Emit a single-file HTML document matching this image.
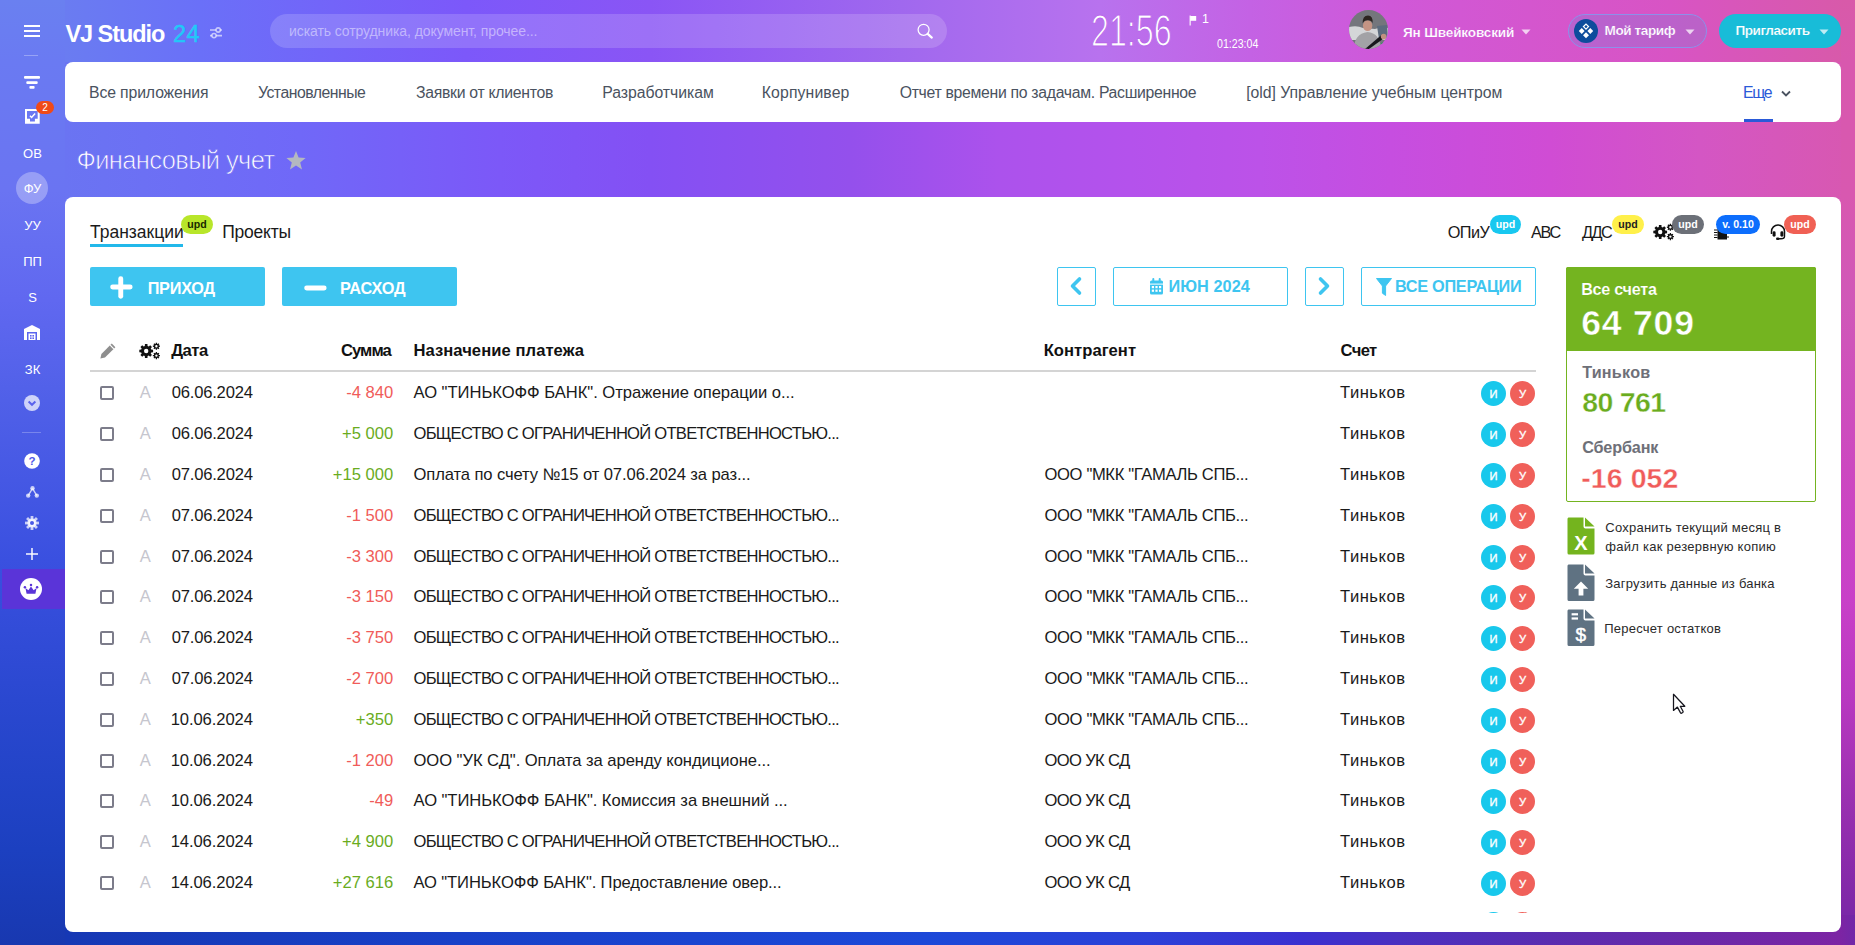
<!DOCTYPE html>
<html><head><meta charset="utf-8">
<style>
*{box-sizing:border-box;margin:0;padding:0}
html,body{width:1855px;height:945px;overflow:hidden}
body{position:relative;font-family:"Liberation Sans",sans-serif;color:#1a1a1a;
background:linear-gradient(to right,#6a80f0 0px,#6a7cf1 65px,#6a70f8 200px,#7c58fa 465px,#8a55f5 650px,#a068ee 900px,#b872ee 1100px,#c462e4 1250px,#d058d8 1390px,#d854c4 1670px,#d85aa8 1855px);}
.abs{position:absolute}
#bgT{position:absolute;left:0;top:62px;width:1855px;height:150px;background:linear-gradient(to right,#6a74f2 0px,#6a74f2 65px,#7068f8 300px,#7c58f8 500px,#8450f4 650px,#9450ec 850px,#ac52ec 1000px,#b452ec 1130px,#bc52e8 1260px,#c64ee0 1390px,#d04cd4 1550px,#d456c4 1700px,#d858b0 1855px)}
#bgL{position:absolute;left:0;top:0;width:65px;height:945px;background:linear-gradient(to bottom,#6a80f0 0px,#6a7af2 62px,#6a74f2 190px,#6068f0 300px,#5060e8 400px,#3a50e0 560px,#2a48d0 700px,#1c40c0 850px,#1838b0 945px)}
#bgR{position:absolute;left:1841px;top:0;width:14px;height:945px;background:linear-gradient(to bottom,#d85aa9 0px,#d858ae 62px,#d858b0 197px,#d058b8 300px,#cc48c0 470px,#c840c8 600px,#b838c0 700px,#9a30b0 800px,#8028a8 900px,#7028a8 945px)}
#bgB{position:absolute;left:65px;top:915px;width:1790px;height:30px;background:linear-gradient(to right,#1638b4 0px,#1840c8 395px,#1c48d8 860px,#2c40d8 1085px,#3a30d0 1235px,#4a30c0 1335px,#5a2cb0 1485px,#6a28a8 1635px,#7c24a4 1776px,#7028a8 1790px)}
.t{position:absolute;white-space:nowrap;line-height:1}
.card{position:absolute;background:#fff;border-radius:8px}
.tbl{position:absolute;left:0;top:0;width:1855px;height:913px;overflow:hidden}
.cb{position:absolute;left:100px;width:14px;height:14px;border:2px solid #7c7c8a;border-radius:2px}
.ci,.cu{position:absolute;width:25px;height:25px;border-radius:50%;color:#fff;font-size:11.2px;font-weight:400;-webkit-text-stroke:0.35px #fff;text-align:center;line-height:27px}
.ci{background:#18c8ec}.cu{background:#f0605a}
.badge{position:absolute;top:215px;height:19px;border-radius:10px;color:#fff;font-size:10.6px;font-weight:700;text-align:center;line-height:19px;white-space:nowrap}
.side{position:absolute;left:0;width:65px;text-align:center;color:#fff;font-size:13px;line-height:1}
</style></head><body>
<div id="bgT"></div><div id="bgL"></div><div id="bgR"></div><div id="bgB"></div>
<div class="abs" style="left:24px;top:25px;width:16px;height:2px;background:#fff"></div>
<div class="abs" style="left:24px;top:30px;width:16px;height:2px;background:#fff"></div>
<div class="abs" style="left:24px;top:35px;width:16px;height:2px;background:#fff"></div>
<div class="abs" style="left:24px;top:55px;width:14px;height:1px;background:rgba(255,255,255,.3)"></div>
<svg class="abs" style="left:24px;top:76px" width="16" height="13" viewBox="0 0 16 13"><rect x="0" y="0" width="16" height="2.8" rx="1" fill="#fff"/><rect x="2.3" y="5.2" width="11.4" height="2.8" rx="1" fill="#fff"/><rect x="5.4" y="10" width="5.2" height="2.8" rx="1" fill="#fff"/></svg>
<svg class="abs" style="left:25px;top:109px" width="15" height="15" viewBox="0 0 15 15"><path d="M0 0H14.7V14.7H0Z M2 2V9.8H5V12.6H9.9V9.8H12.7V2Z" fill="#fff" fill-rule="evenodd"/><path d="M5 6.7L6.6 8.4L10.1 4.5" stroke="#fff" stroke-width="1.5" fill="none"/></svg>
<div class="abs" style="left:36px;top:101px;width:18px;height:13px;border-radius:7px;background:#f04a18;color:#fff;font-size:10px;line-height:13px;text-align:center">2</div>
<div class="side" style="top:147px">ОВ</div>
<div class="abs" style="left:16px;top:172px;width:32px;height:32px;border-radius:50%;background:rgba(255,255,255,.3)"></div>
<div class="side" style="top:182px">ФУ</div>
<div class="side" style="top:219px">УУ</div>
<div class="side" style="top:255px">ПП</div>
<div class="side" style="top:291px">S</div>
<svg class="abs" style="left:24px;top:325px" width="16" height="15" viewBox="0 0 16 15"><path d="M8 0L16 4V15H13V7H3V15H0V4Z" fill="#fff"/><rect x="4.5" y="8.5" width="7" height="6.5" fill="#fff"/><rect x="6" y="10" width="1.6" height="1.6" fill="#6268f0"/><rect x="8.4" y="10" width="1.6" height="1.6" fill="#6268f0"/><rect x="6" y="12.4" width="1.6" height="1.6" fill="#6268f0"/><rect x="8.4" y="12.4" width="1.6" height="1.6" fill="#6268f0"/></svg>
<div class="side" style="top:363px">ЗК</div>
<svg class="abs" style="left:24px;top:395px" width="16" height="16" viewBox="0 0 16 16"><circle cx="8" cy="8" r="8" fill="rgba(255,255,255,.72)"/><path d="M4.6 6.6L8 9.8L11.4 6.6" stroke="#5a62ec" stroke-width="2" fill="none"/></svg>
<div class="abs" style="left:22px;top:432px;width:19px;height:1px;background:rgba(255,255,255,.25)"></div>
<svg class="abs" style="left:24px;top:453px" width="16" height="16" viewBox="0 0 16 16"><circle cx="8" cy="8" r="7.8" fill="#fff"/><text x="8" y="12.3" text-anchor="middle" font-family="Liberation Sans" font-weight="700" font-size="11.5" fill="#5058e8">?</text></svg>
<svg class="abs" style="left:26px;top:486px" width="13" height="12" viewBox="0 0 13 12"><circle cx="6.5" cy="2.3" r="2.2" fill="rgba(255,255,255,.72)"/><circle cx="2.2" cy="9.6" r="2.2" fill="rgba(255,255,255,.72)"/><circle cx="10.8" cy="9.6" r="2.2" fill="rgba(255,255,255,.72)"/><path d="M6.5 2.3L2.2 9.6M6.5 2.3L10.8 9.6" stroke="rgba(255,255,255,.72)" stroke-width="1.4"/></svg>
<svg class="abs" style="left:25px;top:516px" width="14" height="14" viewBox="0 0 14 14"><g fill="rgba(255,255,255,.72)"><circle cx="7" cy="7" r="4.6"/><rect x="5.6" y="0" width="2.8" height="14"/><rect x="0" y="5.6" width="14" height="2.8"/><rect x="5.6" y="0" width="2.8" height="14" transform="rotate(45 7 7)"/><rect x="5.6" y="0" width="2.8" height="14" transform="rotate(-45 7 7)"/></g><circle cx="7" cy="7" r="2" fill="#4a5ae6"/></svg>
<svg class="abs" style="left:26px;top:548px" width="12" height="12" viewBox="0 0 12 12"><rect x="5" y="0" width="2" height="12" fill="rgba(255,255,255,.72)"/><rect x="0" y="5" width="12" height="2" fill="rgba(255,255,255,.72)"/></svg>
<div class="abs" style="left:2px;top:569px;width:63px;height:40px;background:#5a34d8"></div>
<svg class="abs" style="left:20px;top:578px" width="22" height="22" viewBox="0 0 22 22"><circle cx="11" cy="11" r="11" fill="#fff"/><path d="M5.4 10L8.4 12.2L11 8.4L13.6 12.2L16.6 10L15.4 15.7H6.6Z" fill="#5a34d8"/><circle cx="4.9" cy="9.3" r="1.25" fill="#5a34d8"/><circle cx="11" cy="7" r="1.25" fill="#5a34d8"/><circle cx="17.1" cy="9.3" r="1.25" fill="#5a34d8"/></svg>

<div class="t" style="left:65.50px;top:23.11px;font-size:23.5px;font-weight:700;color:#fff;letter-spacing:-1.064px;">VJ Studio</div>
<div class="t" style="left:173.00px;top:23.11px;font-size:23.5px;font-weight:400;color:#22c8f8;letter-spacing:0.430px;-webkit-text-stroke:0.5px #22c8f8;">24</div>
<svg class="abs" style="left:208px;top:25px" width="16" height="14" viewBox="0 0 16 14"><g stroke="rgba(255,255,255,.62)" stroke-width="1.6" fill="none"><path d="M2 5H8M12.3 5H14"/><circle cx="10.2" cy="5" r="2.1"/><path d="M2 10.6H3.8M8.2 10.6H14"/><circle cx="6" cy="10.6" r="2.1"/></g></svg>
<div class="abs" style="left:270px;top:14px;width:677px;height:34px;border-radius:17px;background:rgba(255,255,255,.16)"></div>
<svg class="abs" style="left:914px;top:20px" width="22" height="22" viewBox="0 0 22 22"><circle cx="9.6" cy="9.8" r="5.5" stroke="#fff" stroke-width="1.25" fill="none"/><path d="M13.7 13.9L17.8 17.6" stroke="#fff" stroke-width="2.2" stroke-linecap="round"/></svg>

<div class="t" style="left:289.00px;top:24.15px;font-size:14px;font-weight:400;color:rgba(255,255,255,.47);letter-spacing:-0.084px;">искать сотрудника, документ, прочее...</div>
<div class="t" style="left:1090.92px;top:9.68px;font-size:43.5px;font-weight:400;color:#fff;transform:scaleX(0.7401);transform-origin:0 0;-webkit-text-stroke:1.2px #b868ea;">21:56</div>
<svg class="abs" style="left:1189px;top:15px" width="8" height="11" viewBox="0 0 8 11"><rect x="0.6" y="0.5" width="1.1" height="10" fill="#fff"/><path d="M1.2 1H7.2V5.8H1.2Z" fill="#fff"/></svg>
<div class="t" style="left:1202.00px;top:13.42px;font-size:12.5px;font-weight:400;color:#fff;letter-spacing:-3.400px;">1</div>
<div class="t" style="left:1217.00px;top:37.84px;font-size:12px;font-weight:400;color:#fff;transform:scaleX(0.8844);transform-origin:0 0;">01:23:04</div>
<svg class="abs" style="left:1349px;top:10px" width="39" height="39" viewBox="0 0 39 39"><defs><clipPath id="av"><circle cx="19.5" cy="19.5" r="19.5"/></clipPath></defs><g clip-path="url(#av)"><rect width="39" height="39" fill="#74767c"/><path d="M0 17Q8 15 14 18L26 19Q33 16 39 18V30H0Z" fill="#d4d6d8"/><path d="M28 16L38 15L39 28L30 29Z" fill="#5c6c7e"/><path d="M5 39Q5 24 18.5 22Q31 23 32 39Z" fill="#a2a2a6"/><ellipse cx="18.6" cy="15.6" rx="4.7" ry="5.4" fill="#c49484"/><path d="M13.6 13.6Q13.4 5.6 19 5.6Q24.2 5.8 23.6 13.4Q22.6 10 18.6 10.2Q14.8 10.2 13.6 13.6Z" fill="#2c2420"/><path d="M16 39L33 24.5L36 27.5L20 39Z" fill="#18181c"/><circle cx="34.6" cy="26.6" r="2.8" fill="#c09080"/><path d="M32 33L37 31L38 34L33 36Z" fill="#2a9a60"/></g></svg>
<svg class="abs" style="left:1521px;top:29px" width="10" height="6" viewBox="0 0 10 6"><path d="M0.5 0.5H9.5L5 5.5Z" fill="rgba(255,255,255,.72)"/></svg>
<div class="abs" style="left:1568px;top:14px;width:139px;height:34px;border-radius:17px;border:1px solid #8c90ea;background:rgba(120,130,220,.3)"></div>
<svg class="abs" style="left:1574px;top:19px" width="24" height="24" viewBox="0 0 24 24"><circle cx="12" cy="12" r="12" fill="#0d4c9c"/><g fill="#fff"><path d="M12 13.3L15 16.3L12 19.3L9 16.3Z"/><path d="M7.7 8.9L10.6 11.9L7.7 14.9L4.8 11.9Z"/><path d="M16.3 8.9L19.2 11.9L16.3 14.9L13.4 11.9Z"/></g><path d="M12 5.1L14.5 7.6L12 10.1L9.5 7.6Z" fill="none" stroke="#fff" stroke-width="1.3"/></svg>
<svg class="abs" style="left:1685px;top:29px" width="10" height="6" viewBox="0 0 10 6"><path d="M0.5 0.5H9.5L5 5.5Z" fill="rgba(255,255,255,.72)"/></svg>
<div class="abs" style="left:1719px;top:14px;width:122px;height:34px;border-radius:17px;background:#18bcd8"></div>
<svg class="abs" style="left:1819px;top:29px" width="10" height="6" viewBox="0 0 10 6"><path d="M0.5 0.5H9.5L5 5.5Z" fill="rgba(255,255,255,.72)"/></svg>

<div class="t" style="left:1403.00px;top:26.49px;font-size:13.6px;font-weight:700;color:#fff;letter-spacing:-0.168px;-webkit-text-stroke:0.2px #c952dc;">Ян Швейковский</div>
<div class="t" style="left:1604.50px;top:24.29px;font-size:13.6px;font-weight:700;color:#fff;letter-spacing:-0.417px;-webkit-text-stroke:0.2px #b462d2;">Мой тариф</div>
<div class="t" style="left:1735.40px;top:24.29px;font-size:13.6px;font-weight:700;color:#fff;letter-spacing:-0.469px;-webkit-text-stroke:0.2px #18bcd8;">Пригласить</div>
<div class="card" style="left:65px;top:62px;width:1776px;height:60px"></div>
<div class="t" style="left:89.00px;top:85.13px;font-size:15.8px;font-weight:400;color:#4a5260;letter-spacing:-0.129px;">Все приложения</div>
<div class="t" style="left:258.00px;top:85.13px;font-size:15.8px;font-weight:400;color:#4a5260;letter-spacing:-0.505px;">Установленные</div>
<div class="t" style="left:416.00px;top:85.13px;font-size:15.8px;font-weight:400;color:#4a5260;letter-spacing:-0.291px;">Заявки от клиентов</div>
<div class="t" style="left:602.20px;top:85.13px;font-size:15.8px;font-weight:400;color:#4a5260;letter-spacing:-0.038px;">Разработчикам</div>
<div class="t" style="left:761.80px;top:85.13px;font-size:15.8px;font-weight:400;color:#4a5260;letter-spacing:0.114px;">Корпунивер</div>
<div class="t" style="left:899.70px;top:85.13px;font-size:15.8px;font-weight:400;color:#4a5260;letter-spacing:-0.310px;">Отчет времени по задачам. Расширенное</div>
<div class="t" style="left:1246.20px;top:85.13px;font-size:15.8px;font-weight:400;color:#4a5260;letter-spacing:-0.050px;">[old] Управление учебным центром</div>
<div class="t" style="left:1743.00px;top:85.13px;font-size:15.8px;font-weight:400;color:#2a5ad8;letter-spacing:-1.278px;">Еще</div>
<div class="abs" style="left:1744px;top:119px;width:29px;height:3px;background:#2a5ad8"></div>
<svg class="abs" style="left:1779px;top:89px" width="14" height="9" viewBox="0 0 14 9"><path d="M3 2.5L7 6.5L11 2.5" stroke="#4a5260" stroke-width="1.8" fill="none"/></svg>

<div class="t" style="left:76.50px;top:147.61px;font-size:25.5px;font-weight:400;color:#fff;letter-spacing:-0.634px;-webkit-text-stroke:0.7px #6e6cf4;">Финансовый учет</div>
<svg class="abs" style="left:285px;top:150px" width="22" height="21" viewBox="0 0 22 21"><path d="M11 1L13.6 7.6L20.6 8L15.2 12.5L17 19.4L11 15.6L5 19.4L6.8 12.5L1.4 8L8.4 7.6Z" fill="#b4b8c0"/></svg>
<div class="card" style="left:65px;top:197px;width:1776px;height:735px"></div>
<div class="t" style="left:90.00px;top:223.69px;font-size:17.5px;font-weight:400;color:#1a1a1a;letter-spacing:-0.005px;">Транзакции</div>
<div class="abs" style="left:90px;top:244px;width:93px;height:3px;background:#22b8ea"></div>
<div class="badge" style="left:181px;width:32px;background:#b8e62a;color:#1a2a00">upd</div>
<div class="t" style="left:222.20px;top:223.69px;font-size:17.5px;font-weight:400;color:#1a1a1a;letter-spacing:-0.224px;">Проекты</div>
<div class="t" style="left:1447.70px;top:224.40px;font-size:16.3px;font-weight:400;color:#1a1a1a;letter-spacing:-0.587px;">ОПиУ</div>
<div class="t" style="left:1531.00px;top:224.40px;font-size:16.3px;font-weight:400;color:#1a1a1a;letter-spacing:-1.339px;">АВС</div>
<div class="t" style="left:1582.00px;top:224.40px;font-size:16.3px;font-weight:400;color:#1a1a1a;letter-spacing:-1.526px;">ДДС</div>
<div class="badge" style="left:1490px;width:31px;background:#18c8f0">upd</div>
<div class="badge" style="left:1612px;width:32px;background:#fff04a;color:#222">upd</div>
<svg class="abs" style="left:1653px;top:223px" width="22" height="18" viewBox="0 0 22 18"><path d="M12.21 7.62 L14.09 7.74 L14.09 10.26 L12.21 10.38 L11.72 11.57 L12.96 12.98 L11.18 14.76 L9.77 13.52 L8.58 14.01 L8.46 15.89 L5.94 15.89 L5.82 14.01 L4.63 13.52 L3.22 14.76 L1.44 12.98 L2.68 11.57 L2.19 10.38 L0.31 10.26 L0.31 7.74 L2.19 7.62 L2.68 6.43 L1.44 5.02 L3.22 3.24 L4.63 4.48 L5.82 3.99 L5.94 2.11 L8.46 2.11 L8.58 3.99 L9.77 4.48 L11.18 3.24 L12.96 5.02 L11.72 6.43ZM9.40 9.00A2.2 2.2 0 1 0 5.00 9.00A2.2 2.2 0 1 0 9.40 9.00ZM19.91 3.51 L20.94 3.55 L20.94 4.85 L19.91 4.89 L19.66 5.49 L20.36 6.24 L19.44 7.16 L18.69 6.46 L18.09 6.71 L18.05 7.74 L16.75 7.74 L16.71 6.71 L16.11 6.46 L15.36 7.16 L14.44 6.24 L15.14 5.49 L14.89 4.89 L13.86 4.85 L13.86 3.55 L14.89 3.51 L15.14 2.91 L14.44 2.16 L15.36 1.24 L16.11 1.94 L16.71 1.69 L16.75 0.66 L18.05 0.66 L18.09 1.69 L18.69 1.94 L19.44 1.24 L20.36 2.16 L19.66 2.91ZM18.60 4.20A1.2 1.2 0 1 0 16.20 4.20A1.2 1.2 0 1 0 18.60 4.20ZM19.91 12.91 L20.94 12.95 L20.94 14.25 L19.91 14.29 L19.66 14.89 L20.36 15.64 L19.44 16.56 L18.69 15.86 L18.09 16.11 L18.05 17.14 L16.75 17.14 L16.71 16.11 L16.11 15.86 L15.36 16.56 L14.44 15.64 L15.14 14.89 L14.89 14.29 L13.86 14.25 L13.86 12.95 L14.89 12.91 L15.14 12.31 L14.44 11.56 L15.36 10.64 L16.11 11.34 L16.71 11.09 L16.75 10.06 L18.05 10.06 L18.09 11.09 L18.69 11.34 L19.44 10.64 L20.36 11.56 L19.66 12.31ZM18.60 13.60A1.2 1.2 0 1 0 16.20 13.60A1.2 1.2 0 1 0 18.60 13.60Z" fill="#111" fill-rule="evenodd"/></svg>
<div class="badge" style="left:1672px;width:32px;background:#6c7078">upd</div>
<svg class="abs" style="left:1713px;top:226px" width="18" height="15" viewBox="0 0 18 15"><rect x="4.5" y="2.5" width="9.5" height="11" fill="#111"/><g stroke="#111" stroke-width="1"><path d="M1 4H4.5M1 6.5H4.5M1 9H4.5M1 11.5H4.5M14 11H16"/></g></svg>
<div class="badge" style="left:1716px;width:44px;background:#0d6efd">v. 0.10</div>
<svg class="abs" style="left:1769px;top:223px" width="18" height="18" viewBox="0 0 18 18"><path d="M2.5 11V8.5A6.5 6.5 0 0 1 15.5 8.5V11" stroke="#111" stroke-width="1.5" fill="none"/><rect x="3.6" y="8.3" width="3" height="5.4" rx="1.4" fill="#111"/><rect x="11.4" y="8.3" width="3" height="5.4" rx="1.4" fill="#111"/><path d="M15.5 11V13.5Q15.5 15.8 12 15.8H9" stroke="#111" stroke-width="1.4" fill="none"/><rect x="7" y="14.6" width="3.4" height="2.4" rx="1.2" fill="#111"/></svg>
<div class="badge" style="left:1784px;width:32px;background:#f06054">upd</div>

<div class="abs" style="left:90px;top:267px;width:175px;height:39px;background:#3ec5f0;border-radius:2px"></div>
<div class="abs" style="left:282px;top:267px;width:175px;height:39px;background:#3ec5f0;border-radius:2px"></div>
<svg class="abs" style="left:109px;top:275px" width="25" height="25" viewBox="0 0 25 25"><rect x="9.3" y="1.3" width="4.9" height="22.4" rx="2.4" fill="#fff"/><rect x="1.2" y="9.6" width="22.4" height="4.9" rx="2.4" fill="#fff"/></svg>
<svg class="abs" style="left:303px;top:284px" width="25" height="8" viewBox="0 0 25 8"><rect x="1.2" y="1.6" width="22.4" height="4.9" rx="2.4" fill="#fff"/></svg>
<div class="abs" style="left:1057px;top:267px;width:39px;height:39px;border:1px solid #3ec5f0;border-radius:2px"></div>
<div class="abs" style="left:1113px;top:267px;width:175px;height:39px;border:1px solid #3ec5f0;border-radius:2px"></div>
<div class="abs" style="left:1305px;top:267px;width:39px;height:39px;border:1px solid #3ec5f0;border-radius:2px"></div>
<div class="abs" style="left:1361px;top:267px;width:175px;height:39px;border:1px solid #3ec5f0;border-radius:2px"></div>
<svg class="abs" style="left:1067px;top:276px" width="18" height="20" viewBox="0 0 18 20"><path d="M12.5 3L5.5 10L12.5 17" stroke="#3ec5f0" stroke-width="3.6" fill="none" stroke-linecap="round" stroke-linejoin="round"/></svg>
<svg class="abs" style="left:1315px;top:276px" width="18" height="20" viewBox="0 0 18 20"><path d="M5.5 3L12.5 10L5.5 17" stroke="#3ec5f0" stroke-width="3.6" fill="none" stroke-linecap="round" stroke-linejoin="round"/></svg>
<svg class="abs" style="left:1149px;top:278px" width="15" height="17" viewBox="0 0 15 17"><g fill="#3ec5f0"><rect x="1" y="2.5" width="13" height="14" rx="1.5"/><rect x="3.3" y="0" width="2" height="4" rx="1"/><rect x="9.7" y="0" width="2" height="4" rx="1"/></g><g fill="#fff"><rect x="1" y="5.6" width="13" height="1"/><rect x="2.8" y="8" width="2.2" height="2.2"/><rect x="6.4" y="8" width="2.2" height="2.2"/><rect x="10" y="8" width="2.2" height="2.2"/><rect x="2.8" y="11.6" width="2.2" height="2.2"/><rect x="6.4" y="11.6" width="2.2" height="2.2"/><rect x="10" y="11.6" width="2.2" height="2.2"/></g></svg>
<svg class="abs" style="left:1376px;top:278px" width="16" height="18" viewBox="0 0 16 18"><path d="M0.5 0.5H15.5L9.6 8V17.5L6.4 15.2V8Z" fill="#3ec5f0" stroke="#3ec5f0" stroke-width="1" stroke-linejoin="round"/></svg>

<div class="t" style="left:147.70px;top:279.90px;font-size:16.3px;font-weight:700;color:#fff;letter-spacing:-0.270px;">ПРИХОД</div>
<div class="t" style="left:340.00px;top:279.90px;font-size:16.3px;font-weight:700;color:#fff;letter-spacing:-0.161px;">РАСХОД</div>
<div class="t" style="left:1168.40px;top:278.00px;font-size:16.3px;font-weight:700;color:#3ec5f0;letter-spacing:0.066px;">ИЮН 2024</div>
<div class="t" style="left:1395.00px;top:278.00px;font-size:16.3px;font-weight:700;color:#3ec5f0;letter-spacing:-0.299px;">ВСЕ ОПЕРАЦИИ</div>
<svg class="abs" style="left:99px;top:342px" width="18" height="18" viewBox="0 0 18 18"><path d="M12.8 1.6L16.4 5.2L6 15.6L1.4 16.6L2.4 12Z" fill="#8e8e8e"/><path d="M11.2 3.2L14.8 6.8" stroke="#fff" stroke-width="1.2"/></svg>
<svg class="abs" style="left:139px;top:342px" width="22" height="18" viewBox="0 0 22 18"><path d="M12.21 7.62 L14.09 7.74 L14.09 10.26 L12.21 10.38 L11.72 11.57 L12.96 12.98 L11.18 14.76 L9.77 13.52 L8.58 14.01 L8.46 15.89 L5.94 15.89 L5.82 14.01 L4.63 13.52 L3.22 14.76 L1.44 12.98 L2.68 11.57 L2.19 10.38 L0.31 10.26 L0.31 7.74 L2.19 7.62 L2.68 6.43 L1.44 5.02 L3.22 3.24 L4.63 4.48 L5.82 3.99 L5.94 2.11 L8.46 2.11 L8.58 3.99 L9.77 4.48 L11.18 3.24 L12.96 5.02 L11.72 6.43ZM9.40 9.00A2.2 2.2 0 1 0 5.00 9.00A2.2 2.2 0 1 0 9.40 9.00ZM19.91 3.51 L20.94 3.55 L20.94 4.85 L19.91 4.89 L19.66 5.49 L20.36 6.24 L19.44 7.16 L18.69 6.46 L18.09 6.71 L18.05 7.74 L16.75 7.74 L16.71 6.71 L16.11 6.46 L15.36 7.16 L14.44 6.24 L15.14 5.49 L14.89 4.89 L13.86 4.85 L13.86 3.55 L14.89 3.51 L15.14 2.91 L14.44 2.16 L15.36 1.24 L16.11 1.94 L16.71 1.69 L16.75 0.66 L18.05 0.66 L18.09 1.69 L18.69 1.94 L19.44 1.24 L20.36 2.16 L19.66 2.91ZM18.60 4.20A1.2 1.2 0 1 0 16.20 4.20A1.2 1.2 0 1 0 18.60 4.20ZM19.91 12.91 L20.94 12.95 L20.94 14.25 L19.91 14.29 L19.66 14.89 L20.36 15.64 L19.44 16.56 L18.69 15.86 L18.09 16.11 L18.05 17.14 L16.75 17.14 L16.71 16.11 L16.11 15.86 L15.36 16.56 L14.44 15.64 L15.14 14.89 L14.89 14.29 L13.86 14.25 L13.86 12.95 L14.89 12.91 L15.14 12.31 L14.44 11.56 L15.36 10.64 L16.11 11.34 L16.71 11.09 L16.75 10.06 L18.05 10.06 L18.09 11.09 L18.69 11.34 L19.44 10.64 L20.36 11.56 L19.66 12.31ZM18.60 13.60A1.2 1.2 0 1 0 16.20 13.60A1.2 1.2 0 1 0 18.60 13.60Z" fill="#111" fill-rule="evenodd"/></svg>
<div class="abs" style="left:90px;top:370px;width:1446px;height:2px;background:#d4d4d4"></div>

<div class="t" style="left:171.20px;top:342.75px;font-size:16.6px;font-weight:700;color:#111;letter-spacing:-0.459px;">Дата</div>
<div class="t" style="left:340.90px;top:342.75px;font-size:16.6px;font-weight:700;color:#111;letter-spacing:-0.906px;">Сумма</div>
<div class="t" style="left:413.40px;top:342.75px;font-size:16.6px;font-weight:700;color:#111;letter-spacing:0.058px;">Назначение платежа</div>
<div class="t" style="left:1043.70px;top:342.75px;font-size:16.6px;font-weight:700;color:#111;letter-spacing:0.029px;">Контрагент</div>
<div class="t" style="left:1340.60px;top:342.75px;font-size:16.6px;font-weight:700;color:#111;letter-spacing:-0.669px;">Счет</div>
<div class="tbl">
<div class="cb" style="top:386.00px"></div>
<div class="t" style="left:139.70px;top:384.85px;font-size:16.6px;font-weight:400;color:#c6c6ce;">A</div>
<div class="t" style="left:171.70px;top:384.85px;font-size:16.6px;font-weight:400;color:#1a1a1a;letter-spacing:-0.202px;">06.06.2024</div>
<div class="t" style="left:346.18px;top:384.85px;font-size:16.6px;font-weight:400;color:#f05c5a;">-4 840</div>
<div class="t" style="left:413.50px;top:384.85px;font-size:16.6px;font-weight:400;color:#1a1a1a;letter-spacing:-0.040px;">АО "ТИНЬКОФФ БАНК". Отражение операции о...</div>
<div class="t" style="left:1340.00px;top:384.85px;font-size:16.6px;font-weight:400;color:#1a1a1a;letter-spacing:0.507px;">Тиньков</div>
<div class="ci" style="left:1481px;top:381.00px">И</div><div class="cu" style="left:1510px;top:381.00px">У</div>
<div class="cb" style="top:427.00px"></div>
<div class="t" style="left:139.70px;top:425.85px;font-size:16.6px;font-weight:400;color:#c6c6ce;">A</div>
<div class="t" style="left:171.70px;top:425.85px;font-size:16.6px;font-weight:400;color:#1a1a1a;letter-spacing:-0.202px;">06.06.2024</div>
<div class="t" style="left:342.01px;top:425.85px;font-size:16.6px;font-weight:400;color:#6aac1e;">+5 000</div>
<div class="t" style="left:413.50px;top:425.85px;font-size:16.6px;font-weight:400;color:#1a1a1a;letter-spacing:-0.758px;">ОБЩЕСТВО С ОГРАНИЧЕННОЙ ОТВЕТСТВЕННОСТЬЮ...</div>
<div class="t" style="left:1340.00px;top:425.85px;font-size:16.6px;font-weight:400;color:#1a1a1a;letter-spacing:0.507px;">Тиньков</div>
<div class="ci" style="left:1481px;top:422.00px">И</div><div class="cu" style="left:1510px;top:422.00px">У</div>
<div class="cb" style="top:468.00px"></div>
<div class="t" style="left:139.70px;top:466.85px;font-size:16.6px;font-weight:400;color:#c6c6ce;">A</div>
<div class="t" style="left:171.70px;top:466.85px;font-size:16.6px;font-weight:400;color:#1a1a1a;letter-spacing:-0.202px;">07.06.2024</div>
<div class="t" style="left:332.78px;top:466.85px;font-size:16.6px;font-weight:400;color:#6aac1e;">+15 000</div>
<div class="t" style="left:413.50px;top:466.85px;font-size:16.6px;font-weight:400;color:#1a1a1a;letter-spacing:-0.102px;">Оплата по счету №15 от 07.06.2024 за раз...</div>
<div class="t" style="left:1044.50px;top:466.85px;font-size:16.6px;font-weight:400;color:#1a1a1a;letter-spacing:-0.363px;">ООО "МКК "ГАМАЛЬ СПБ...</div>
<div class="t" style="left:1340.00px;top:466.85px;font-size:16.6px;font-weight:400;color:#1a1a1a;letter-spacing:0.507px;">Тиньков</div>
<div class="ci" style="left:1481px;top:463.00px">И</div><div class="cu" style="left:1510px;top:463.00px">У</div>
<div class="cb" style="top:509.00px"></div>
<div class="t" style="left:139.70px;top:507.85px;font-size:16.6px;font-weight:400;color:#c6c6ce;">A</div>
<div class="t" style="left:171.70px;top:507.85px;font-size:16.6px;font-weight:400;color:#1a1a1a;letter-spacing:-0.202px;">07.06.2024</div>
<div class="t" style="left:346.18px;top:507.85px;font-size:16.6px;font-weight:400;color:#f05c5a;">-1 500</div>
<div class="t" style="left:413.50px;top:507.85px;font-size:16.6px;font-weight:400;color:#1a1a1a;letter-spacing:-0.758px;">ОБЩЕСТВО С ОГРАНИЧЕННОЙ ОТВЕТСТВЕННОСТЬЮ...</div>
<div class="t" style="left:1044.50px;top:507.85px;font-size:16.6px;font-weight:400;color:#1a1a1a;letter-spacing:-0.363px;">ООО "МКК "ГАМАЛЬ СПБ...</div>
<div class="t" style="left:1340.00px;top:507.85px;font-size:16.6px;font-weight:400;color:#1a1a1a;letter-spacing:0.507px;">Тиньков</div>
<div class="ci" style="left:1481px;top:504.00px">И</div><div class="cu" style="left:1510px;top:504.00px">У</div>
<div class="cb" style="top:550.00px"></div>
<div class="t" style="left:139.70px;top:548.85px;font-size:16.6px;font-weight:400;color:#c6c6ce;">A</div>
<div class="t" style="left:171.70px;top:548.85px;font-size:16.6px;font-weight:400;color:#1a1a1a;letter-spacing:-0.202px;">07.06.2024</div>
<div class="t" style="left:346.18px;top:548.85px;font-size:16.6px;font-weight:400;color:#f05c5a;">-3 300</div>
<div class="t" style="left:413.50px;top:548.85px;font-size:16.6px;font-weight:400;color:#1a1a1a;letter-spacing:-0.758px;">ОБЩЕСТВО С ОГРАНИЧЕННОЙ ОТВЕТСТВЕННОСТЬЮ...</div>
<div class="t" style="left:1044.50px;top:548.85px;font-size:16.6px;font-weight:400;color:#1a1a1a;letter-spacing:-0.363px;">ООО "МКК "ГАМАЛЬ СПБ...</div>
<div class="t" style="left:1340.00px;top:548.85px;font-size:16.6px;font-weight:400;color:#1a1a1a;letter-spacing:0.507px;">Тиньков</div>
<div class="ci" style="left:1481px;top:545.00px">И</div><div class="cu" style="left:1510px;top:545.00px">У</div>
<div class="cb" style="top:590.00px"></div>
<div class="t" style="left:139.70px;top:588.85px;font-size:16.6px;font-weight:400;color:#c6c6ce;">A</div>
<div class="t" style="left:171.70px;top:588.85px;font-size:16.6px;font-weight:400;color:#1a1a1a;letter-spacing:-0.202px;">07.06.2024</div>
<div class="t" style="left:346.18px;top:588.85px;font-size:16.6px;font-weight:400;color:#f05c5a;">-3 150</div>
<div class="t" style="left:413.50px;top:588.85px;font-size:16.6px;font-weight:400;color:#1a1a1a;letter-spacing:-0.758px;">ОБЩЕСТВО С ОГРАНИЧЕННОЙ ОТВЕТСТВЕННОСТЬЮ...</div>
<div class="t" style="left:1044.50px;top:588.85px;font-size:16.6px;font-weight:400;color:#1a1a1a;letter-spacing:-0.363px;">ООО "МКК "ГАМАЛЬ СПБ...</div>
<div class="t" style="left:1340.00px;top:588.85px;font-size:16.6px;font-weight:400;color:#1a1a1a;letter-spacing:0.507px;">Тиньков</div>
<div class="ci" style="left:1481px;top:585.00px">И</div><div class="cu" style="left:1510px;top:585.00px">У</div>
<div class="cb" style="top:631.00px"></div>
<div class="t" style="left:139.70px;top:629.85px;font-size:16.6px;font-weight:400;color:#c6c6ce;">A</div>
<div class="t" style="left:171.70px;top:629.85px;font-size:16.6px;font-weight:400;color:#1a1a1a;letter-spacing:-0.202px;">07.06.2024</div>
<div class="t" style="left:346.18px;top:629.85px;font-size:16.6px;font-weight:400;color:#f05c5a;">-3 750</div>
<div class="t" style="left:413.50px;top:629.85px;font-size:16.6px;font-weight:400;color:#1a1a1a;letter-spacing:-0.758px;">ОБЩЕСТВО С ОГРАНИЧЕННОЙ ОТВЕТСТВЕННОСТЬЮ...</div>
<div class="t" style="left:1044.50px;top:629.85px;font-size:16.6px;font-weight:400;color:#1a1a1a;letter-spacing:-0.363px;">ООО "МКК "ГАМАЛЬ СПБ...</div>
<div class="t" style="left:1340.00px;top:629.85px;font-size:16.6px;font-weight:400;color:#1a1a1a;letter-spacing:0.507px;">Тиньков</div>
<div class="ci" style="left:1481px;top:626.00px">И</div><div class="cu" style="left:1510px;top:626.00px">У</div>
<div class="cb" style="top:672.00px"></div>
<div class="t" style="left:139.70px;top:670.85px;font-size:16.6px;font-weight:400;color:#c6c6ce;">A</div>
<div class="t" style="left:171.70px;top:670.85px;font-size:16.6px;font-weight:400;color:#1a1a1a;letter-spacing:-0.202px;">07.06.2024</div>
<div class="t" style="left:346.18px;top:670.85px;font-size:16.6px;font-weight:400;color:#f05c5a;">-2 700</div>
<div class="t" style="left:413.50px;top:670.85px;font-size:16.6px;font-weight:400;color:#1a1a1a;letter-spacing:-0.758px;">ОБЩЕСТВО С ОГРАНИЧЕННОЙ ОТВЕТСТВЕННОСТЬЮ...</div>
<div class="t" style="left:1044.50px;top:670.85px;font-size:16.6px;font-weight:400;color:#1a1a1a;letter-spacing:-0.363px;">ООО "МКК "ГАМАЛЬ СПБ...</div>
<div class="t" style="left:1340.00px;top:670.85px;font-size:16.6px;font-weight:400;color:#1a1a1a;letter-spacing:0.507px;">Тиньков</div>
<div class="ci" style="left:1481px;top:667.00px">И</div><div class="cu" style="left:1510px;top:667.00px">У</div>
<div class="cb" style="top:713.00px"></div>
<div class="t" style="left:139.70px;top:711.85px;font-size:16.6px;font-weight:400;color:#c6c6ce;">A</div>
<div class="t" style="left:170.70px;top:711.85px;font-size:16.6px;font-weight:400;color:#1a1a1a;letter-spacing:-0.091px;">10.06.2024</div>
<div class="t" style="left:355.85px;top:711.85px;font-size:16.6px;font-weight:400;color:#6aac1e;">+350</div>
<div class="t" style="left:413.50px;top:711.85px;font-size:16.6px;font-weight:400;color:#1a1a1a;letter-spacing:-0.758px;">ОБЩЕСТВО С ОГРАНИЧЕННОЙ ОТВЕТСТВЕННОСТЬЮ...</div>
<div class="t" style="left:1044.50px;top:711.85px;font-size:16.6px;font-weight:400;color:#1a1a1a;letter-spacing:-0.363px;">ООО "МКК "ГАМАЛЬ СПБ...</div>
<div class="t" style="left:1340.00px;top:711.85px;font-size:16.6px;font-weight:400;color:#1a1a1a;letter-spacing:0.507px;">Тиньков</div>
<div class="ci" style="left:1481px;top:708.00px">И</div><div class="cu" style="left:1510px;top:708.00px">У</div>
<div class="cb" style="top:754.00px"></div>
<div class="t" style="left:139.70px;top:752.85px;font-size:16.6px;font-weight:400;color:#c6c6ce;">A</div>
<div class="t" style="left:170.70px;top:752.85px;font-size:16.6px;font-weight:400;color:#1a1a1a;letter-spacing:-0.091px;">10.06.2024</div>
<div class="t" style="left:346.18px;top:752.85px;font-size:16.6px;font-weight:400;color:#f05c5a;">-1 200</div>
<div class="t" style="left:413.50px;top:752.85px;font-size:16.6px;font-weight:400;color:#1a1a1a;letter-spacing:-0.059px;">ООО "УК СД". Оплата за аренду кондиционе...</div>
<div class="t" style="left:1044.50px;top:752.85px;font-size:16.6px;font-weight:400;color:#1a1a1a;letter-spacing:-0.659px;">ООО УК СД</div>
<div class="t" style="left:1340.00px;top:752.85px;font-size:16.6px;font-weight:400;color:#1a1a1a;letter-spacing:0.507px;">Тиньков</div>
<div class="ci" style="left:1481px;top:749.00px">И</div><div class="cu" style="left:1510px;top:749.00px">У</div>
<div class="cb" style="top:794.00px"></div>
<div class="t" style="left:139.70px;top:792.85px;font-size:16.6px;font-weight:400;color:#c6c6ce;">A</div>
<div class="t" style="left:170.70px;top:792.85px;font-size:16.6px;font-weight:400;color:#1a1a1a;letter-spacing:-0.091px;">10.06.2024</div>
<div class="t" style="left:369.25px;top:792.85px;font-size:16.6px;font-weight:400;color:#f05c5a;">-49</div>
<div class="t" style="left:413.50px;top:792.85px;font-size:16.6px;font-weight:400;color:#1a1a1a;letter-spacing:-0.063px;">АО "ТИНЬКОФФ БАНК". Комиссия за внешний ...</div>
<div class="t" style="left:1044.50px;top:792.85px;font-size:16.6px;font-weight:400;color:#1a1a1a;letter-spacing:-0.659px;">ООО УК СД</div>
<div class="t" style="left:1340.00px;top:792.85px;font-size:16.6px;font-weight:400;color:#1a1a1a;letter-spacing:0.507px;">Тиньков</div>
<div class="ci" style="left:1481px;top:789.00px">И</div><div class="cu" style="left:1510px;top:789.00px">У</div>
<div class="cb" style="top:835.00px"></div>
<div class="t" style="left:139.70px;top:833.85px;font-size:16.6px;font-weight:400;color:#c6c6ce;">A</div>
<div class="t" style="left:170.70px;top:833.85px;font-size:16.6px;font-weight:400;color:#1a1a1a;letter-spacing:-0.091px;">14.06.2024</div>
<div class="t" style="left:342.01px;top:833.85px;font-size:16.6px;font-weight:400;color:#6aac1e;">+4 900</div>
<div class="t" style="left:413.50px;top:833.85px;font-size:16.6px;font-weight:400;color:#1a1a1a;letter-spacing:-0.758px;">ОБЩЕСТВО С ОГРАНИЧЕННОЙ ОТВЕТСТВЕННОСТЬЮ...</div>
<div class="t" style="left:1044.50px;top:833.85px;font-size:16.6px;font-weight:400;color:#1a1a1a;letter-spacing:-0.659px;">ООО УК СД</div>
<div class="t" style="left:1340.00px;top:833.85px;font-size:16.6px;font-weight:400;color:#1a1a1a;letter-spacing:0.507px;">Тиньков</div>
<div class="ci" style="left:1481px;top:830.00px">И</div><div class="cu" style="left:1510px;top:830.00px">У</div>
<div class="cb" style="top:876.00px"></div>
<div class="t" style="left:139.70px;top:874.85px;font-size:16.6px;font-weight:400;color:#c6c6ce;">A</div>
<div class="t" style="left:170.70px;top:874.85px;font-size:16.6px;font-weight:400;color:#1a1a1a;letter-spacing:-0.091px;">14.06.2024</div>
<div class="t" style="left:332.78px;top:874.85px;font-size:16.6px;font-weight:400;color:#6aac1e;">+27 616</div>
<div class="t" style="left:413.50px;top:874.85px;font-size:16.6px;font-weight:400;color:#1a1a1a;letter-spacing:-0.126px;">АО "ТИНЬКОФФ БАНК". Предоставление овер...</div>
<div class="t" style="left:1044.50px;top:874.85px;font-size:16.6px;font-weight:400;color:#1a1a1a;letter-spacing:-0.659px;">ООО УК СД</div>
<div class="t" style="left:1340.00px;top:874.85px;font-size:16.6px;font-weight:400;color:#1a1a1a;letter-spacing:0.507px;">Тиньков</div>
<div class="ci" style="left:1481px;top:871.00px">И</div><div class="cu" style="left:1510px;top:871.00px">У</div>
<div class="ci" style="left:1481px;top:912.00px"></div><div class="cu" style="left:1510px;top:912.00px"></div>
</div>
<div class="abs" style="left:1566px;top:267px;width:250px;height:235px;border:1px solid #74b420;border-radius:2px"></div>
<div class="abs" style="left:1566px;top:267px;width:250px;height:84px;background:#74b420;border-radius:2px 2px 0 0"></div>
<div class="t" style="left:1581.20px;top:281.39px;font-size:16.2px;font-weight:700;color:#fff;letter-spacing:-0.274px;-webkit-text-stroke:0.15px #74b420;">Все счета</div>
<div class="t" style="left:1581.20px;top:306.45px;font-size:35.5px;font-weight:700;color:#fff;letter-spacing:0.833px;-webkit-text-stroke:0.45px #74b420;">64 709</div>
<div class="t" style="left:1582.20px;top:364.09px;font-size:16.2px;font-weight:700;color:#6e7078;letter-spacing:0.229px;">Тиньков</div>
<div class="t" style="left:1582.20px;top:388.17px;font-size:28.5px;font-weight:700;color:#6aac1e;letter-spacing:-0.644px;-webkit-text-stroke:0.35px #fff;">80 761</div>
<div class="t" style="left:1582.20px;top:439.29px;font-size:16.2px;font-weight:700;color:#6e7078;letter-spacing:-0.149px;">Сбербанк</div>
<div class="t" style="left:1581.20px;top:463.87px;font-size:28.5px;font-weight:700;color:#f05c5a;letter-spacing:0.082px;-webkit-text-stroke:0.35px #fff;">-16 052</div>
<svg class="abs" style="left:1567px;top:517px" width="28" height="38" viewBox="0 0 28 38"><path d="M1.5 0.5H16.5V9.5Q16.5 11.5 18.5 11.5H27.5V36Q27.5 37.5 26 37.5H2Q0.5 37.5 0.5 36V2Q0.5 0.5 1.5 0.5Z" fill="#74b41e"/><path d="M18 0.5L27.5 9.5H18Z" fill="#74b41e"/><text x="13.9" y="33" text-anchor="middle" font-family="Liberation Sans" font-weight="700" font-size="20" fill="#fff">X</text></svg>
<svg class="abs" style="left:1567px;top:564px" width="28" height="38" viewBox="0 0 28 38"><path d="M1.5 0.5H16.5V9.5Q16.5 11.5 18.5 11.5H27.5V35.5Q27.5 37 26 37H2Q0.5 37 0.5 35.5V2Q0.5 0.5 1.5 0.5Z" fill="#5f7282"/><path d="M18 0.5L27.5 9.5H18Z" fill="#5f7282"/><path d="M14 17.6L21.2 24.8H16.4V31.6H11.6V24.8H6.8Z" fill="#fff"/></svg>
<svg class="abs" style="left:1567px;top:609px" width="28" height="38" viewBox="0 0 28 38"><path d="M1.5 0.5H16.5V9.5Q16.5 11.5 18.5 11.5H27.5V35.5Q27.5 37 26 37H2Q0.5 37 0.5 35.5V2Q0.5 0.5 1.5 0.5Z" fill="#5f7282"/><path d="M18 0.5L27.5 9.5H18Z" fill="#5f7282"/><rect x="4.6" y="4.2" width="6.4" height="2.2" fill="#fff"/><rect x="4.6" y="8.4" width="6.4" height="2.2" fill="#fff"/><text x="13.8" y="31.6" text-anchor="middle" font-family="Liberation Sans" font-weight="400" font-size="19" fill="#fff" stroke="#fff" stroke-width="0.5">$</text></svg>

<div class="t" style="left:1605.30px;top:521.00px;font-size:13px;font-weight:400;color:#2a2a2a;letter-spacing:0.230px;">Сохранить текущий месяц в</div>
<div class="t" style="left:1605.30px;top:539.70px;font-size:13px;font-weight:400;color:#2a2a2a;letter-spacing:0.263px;">файл как резервную копию</div>
<div class="t" style="left:1605.30px;top:576.80px;font-size:13px;font-weight:400;color:#2a2a2a;letter-spacing:0.221px;">Загрузить данные из банка</div>
<div class="t" style="left:1604.30px;top:621.70px;font-size:13px;font-weight:400;color:#2a2a2a;letter-spacing:0.230px;">Пересчет остатков</div>
<svg class="abs" style="left:1672px;top:693px" width="14" height="21" viewBox="0 0 14 21"><path d="M1.5 1.3V17.4L5.4 14.1L8.4 19.6Q9 20.6 10 20L10.6 19.6Q11.4 19 11 18.2L8.3 13.3H12.8Z" fill="#fff" stroke="#16161e" stroke-width="1.25" stroke-linejoin="round"/></svg>
</body></html>
